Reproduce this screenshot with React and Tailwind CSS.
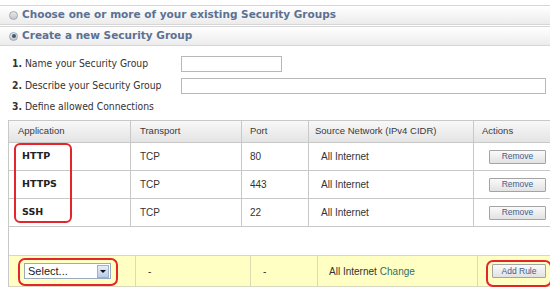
import React from 'react';

const rules = [
  { app: 'HTTP', transport: 'TCP', port: '80', source: 'All Internet' },
  { app: 'HTTPS', transport: 'TCP', port: '443', source: 'All Internet' },
  { app: 'SSH', transport: 'TCP', port: '22', source: 'All Internet' },
];

const cols = 'grid grid-cols-[122px_111px_67px_165px_1fr]';

function Radio({ checked }) {
  return (
    <span className="flex h-[9px] w-[9px] items-center justify-center rounded-full border border-[#a0a8b0] bg-gradient-to-b from-[#e8e8e8] to-[#c4c8cc]">
      {checked && <span className="h-[4px] w-[4px] rounded-full bg-[#3c5a78]" />}
    </span>
  );
}

function Bar({ checked, children }) {
  return (
    <div className="flex h-[20px] items-center gap-[4px] border-y border-[#d6d6d6] bg-gradient-to-b from-white to-[#ececec] pl-[9px]">
      <Radio checked={checked} />
      <span className="font-['DejaVu_Sans',sans-serif] text-[10.5px] font-bold text-[#5b7193]">{children}</span>
    </div>
  );
}

function SmallButton({ children }) {
  return (
    <button
      type="button"
      className="h-[14px] rounded-[1px] border border-[#a4a4a4] bg-gradient-to-b from-[#fafafa] to-[#e2e2e2] px-0 text-[8.5px] leading-none text-[#3d5d8c]"
    >
      {children}
    </button>
  );
}

export default function App() {
  return (
    <div className="h-[289px] w-[550px] overflow-hidden bg-white pt-[5px] font-['Liberation_Sans',Arial,sans-serif] text-[#333]">
      <Bar>Choose one or more of your existing Security Groups</Bar>
      <div className="h-px" />
      <Bar checked>Create a new Security Group</Bar>

      <div className="pl-[12px] pt-[9px] font-['DejaVu_Sans_Condensed','DejaVu_Sans',sans-serif] text-[10.3px] text-[#333]">
        <div className="flex h-[17px] items-center">
          <span className="w-[169px]"><b>1.</b> Name your Security Group</span>
          <div className="h-[16px] w-[101px] border border-[#b8b8b8] bg-white" />
        </div>
        <div className="mt-[5px] flex h-[17px] items-center">
          <span className="w-[169px]"><b>2.</b> Describe your Security Group</span>
          <div className="h-[16px] w-[365px] border border-[#b8b8b8] bg-white" />
        </div>
        <div className="mt-[4px] flex h-[17px] items-center">
          <span><b>3.</b> Define allowed Connections</span>
        </div>
      </div>

      <div className="relative ml-[8px] mt-[5px] border-l border-t border-[#c8c8c8] text-[10px]">
        <div className={`${cols} h-[22px] border-b border-[#c8c8c8] bg-gradient-to-b from-[#f8f8f8] to-[#e4e4e4] text-[9.5px] text-[#3a3a3a]`}>
          <div className="flex items-center border-r border-[#c8c8c8] pl-[9px]">Application</div>
          <div className="flex items-center border-r border-[#c8c8c8] pl-[9px]">Transport</div>
          <div className="flex items-center border-r border-[#c8c8c8] pl-[8px]">Port</div>
          <div className="flex items-center border-r border-[#c8c8c8] pl-[6px]">Source Network (IPv4 CIDR)</div>
          <div className="flex items-center pl-[8px]">Actions</div>
        </div>
        {rules.map((r) => (
          <div key={r.app} className={`${cols} h-[28px] border-b border-[#c8c8c8]`}>
            <div className="flex items-center border-r border-[#c8c8c8] pl-[13px] font-['DejaVu_Sans',sans-serif] text-[9.5px] font-bold text-[#222]">{r.app}</div>
            <div className="flex items-center border-r border-[#c8c8c8] pl-[9px]">{r.transport}</div>
            <div className="flex items-center border-r border-[#c8c8c8] pl-[8px]">{r.port}</div>
            <div className="flex items-center border-r border-[#c8c8c8] pl-[12px]">{r.source}</div>
            <div className="flex items-center pl-[15px]">
              <SmallButton><span className="block w-[55px]">Remove</span></SmallButton>
            </div>
          </div>
        ))}
        <div className="h-[28px]" />
        <div className="grid h-[32px] grid-cols-[127px_115px_67px_160px_1fr] border-y border-[#d8d8c0] bg-[#ffffc4]">
          <div className="flex items-center border-r border-[#dcdcb0] pl-[15px]">
            <div className="flex h-[16px] w-[87px] items-center border border-[#9aaab8] bg-white pl-[3px] text-[11px] text-[#222]">
              <span className="flex-1">Select...</span>
              <span className="mr-px flex h-[13px] w-[12px] items-center justify-center border border-[#9ab2cc] bg-gradient-to-b from-[#e6eefa] to-[#b8ccea]">
                <span className="h-0 w-0 border-x-[3px] border-t-[3px] border-x-transparent border-t-[#111]" />
              </span>
            </div>
          </div>
          <div className="flex items-center border-r border-[#dcdcb0] pl-[12px]">-</div>
          <div className="flex items-center border-r border-[#dcdcb0] pl-[12px]">-</div>
          <div className="flex items-center gap-[3px] border-r border-[#dcdcb0] pl-[11px]">
            <span>All Internet</span>
            <span className="text-[#2e6f6a]">Change</span>
          </div>
          <div className="flex items-center pl-[14px]">
            <SmallButton><span className="block w-[52px]">Add Rule</span></SmallButton>
          </div>
        </div>

        <div className="pointer-events-none absolute left-[5px] top-[22px] h-[80px] w-[58px] rounded-[6px] border-2 border-[#e3262e]" />
        <div className="pointer-events-none absolute left-[9px] top-[137px] h-[28px] w-[100px] rounded-[7px] border-2 border-[#e3262e]" />
        <div className="pointer-events-none absolute left-[477px] top-[139px] h-[27px] w-[66px] rounded-[7px] border-2 border-[#e3262e]" />
      </div>
    </div>
  );
}
